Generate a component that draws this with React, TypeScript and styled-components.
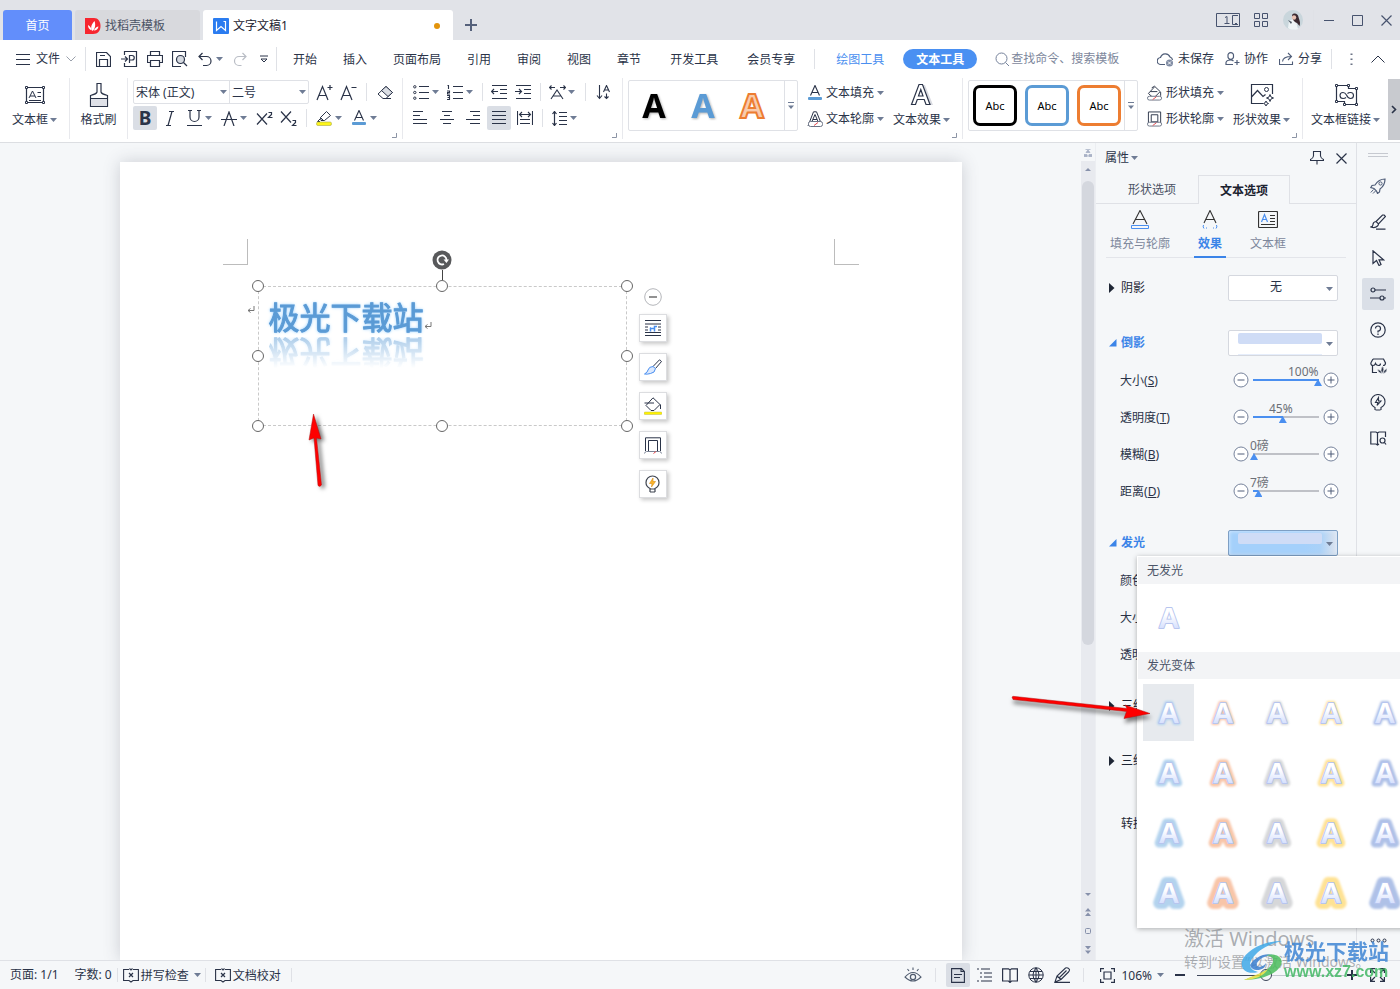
import React from 'react';
import styled, { createGlobalStyle, css } from 'styled-components';

const ink = '#2a3348';
const accent = '#4a8ff0';
const line = '#dfe1e6';

const Global = createGlobalStyle`
  *, *::before, *::after { box-sizing: border-box; }
  html, body { margin: 0; height: 100%; }
  body {
    font-family: 'Noto Sans', 'Noto Sans CJK SC', sans-serif;
    font-size: 12px;
    line-height: 16px;
    color: ${ink};
    background: #f5f7f9;
  }
  button, input, select {
    font: inherit;
    color: inherit;
    background: none;
    border: 0;
    padding: 0;
    margin: 0;
    outline: none;
  }
  svg { display: block; flex: none; }
`;

/* ---------- icons ---------- */

type IconDef = [number, number, React.ReactNode];

const icons: Record<string, IconDef> = {
  wps: [16, 16, <>
    <rect width="16" height="16" rx="1" fill="#2b7cf0" stroke="none" />
    <path d="M3.500 3.500V12.500L8 8.500L12.500 12.500V3.500H10.500" stroke="#fff" strokeWidth="1.200" />
  </>],
  docer: [16, 16, <>
    <path d="M0 0H9C13 0 15.500 3.500 15.500 8S13 16 8 16H0Z" fill="#f7262f" stroke="none" />
    <path d="M7.500 13C5 10 6.500 6 9.500 3C11 7 10 11 7.500 13ZM6.500 12.500C3.500 11 3 9 3 7C5 8 6.500 10 6.500 12.500ZM8.800 12.500C10 10 12 8.500 13.500 8.500C13 11 11.500 12.500 8.800 12.500Z" fill="#fff" stroke="none" />
  </>],
  plus: [12, 12, <path d="M6 0V12M0 6H12" strokeWidth="2" />],
  panes: [24, 14, <>
    <path d="M.5 .5H23.500V13.500H.5Z M22 2.500H16.500V11.500H22M19 10.500H21" />
    <path d="M9 4.500L11 3.500V10.500M8.500 10.500H13.500" />
  </>],
  grid: [15, 14, <path d="M.5 .5H5.500V5.500H.5ZM8.500 .5H13.500V5.500H8.500ZM.5 8.500H5.500V13.500H.5ZM8.500 8.500H13.500V13.500H8.500Z" />],
  avatar: [20, 20, <>
    <circle cx="10" cy="10" r="10" fill="#c9d6dc" stroke="none" />
    <path d="M6 11L12 8L15 19C12 20.500 7 20 5 18Z" fill="#eef4f6" stroke="none" />
    <path d="M9 5C11 2.500 15 3.500 15.500 7C16 10 18 12 16.500 16L14 13C11 12 9 9 9 5Z" fill="#3a2a31" stroke="none" />
    <circle cx="11" cy="7.500" r="2.200" fill="#e9c3b4" stroke="none" />
    <path d="M5 10L9 12L8 14Z" fill="#4b5561" stroke="none" />
  </>],
  min: [10, 11, <path d="M0 5.500H10" />],
  max: [11, 11, <path d="M.5 .5H10.500V10.500H.5Z" />],
  close: [11, 11, <path d="M.5 .5L10.500 10.500M10.500 .5L.5 10.500" strokeWidth="1.200" />],
  menu: [14, 11, <path d="M0 .5H14M0 5.500H14M0 10.500H14" />],
  chevDown: [10, 6, <path d="M.5 .5L5 5L9.500 .5" stroke="#9aa0ab" />],
  chevUp: [14, 8, <path d="M.5 7.500L7 1L13.500 7.500" />],
  chevRight: [6, 9, <path d="M1 1L4.500 4.500L1 8" strokeWidth="1.600" />],
  caret: [7, 4, <path d="M0 0H7L3.500 4Z" fill="#6f7c95" stroke="none" />],
  moreCaret: [6, 8, <><path d="M0 .5H6" stroke="#6f7c95" /><path d="M0 3.500H6L3 7Z" fill="#6f7c95" stroke="none" /></>],
  quick: [8, 8, <path d="M0 1H8M1 4L4 7L7 4Z" />],
  save: [15, 15, <path d="M.5 .5H10.500L14.500 4.500V14.500H.5ZM3.500 14.500V7.500H11.500V14.500M4 3.500H9" strokeWidth="1.200" />],
  exportPdf: [17, 16, <path d="M3.500 4V.5H15.500V15.500H3.500V12M0 8H6.500M4 5.500L6.500 8L4 10.500M8.500 12V4.500H11A2 2 0 0 1 11 9H8.500" strokeWidth="1.200" />],
  print: [16, 16, <path d="M3.500 4.500V.5H12.500V4.500M3.500 11.500H.5V4.500H15.500V11.500H12.500M3.500 9.500H12.500V15.500H3.500Z" strokeWidth="1.200" />],
  preview: [16, 16, <>
    <path d="M9 15.500H.5V.5H13.500V6" strokeWidth="1.200" />
    <circle cx="8.500" cy="8.500" r="4" fill="#d5d9e0" strokeWidth="1.200" /><path d="M11.500 11.500L15 15" strokeWidth="1.300" />
  </>],
  undo: [14, 15, <path d="M4.500 1L1 4.500L4.500 8M1 4.500H8.500A4.500 4.500 0 0 1 8.500 13.500H5" strokeWidth="1.200" />],
  redo: [14, 15, <path d="M9.500 1L13 4.500L9.500 8M13 4.500H6A4.500 4.500 0 0 0 6 13.500H8.500" stroke="#b9bdc5" strokeWidth="1.200" />],
  search: [15, 15, <><circle cx="6.500" cy="6.500" r="5.500" stroke="#75829b" /><path d="M10.500 10.500L14 14" stroke="#75829b" /></>],
  cloud: [17, 15, <>
    <path d="M8 12.500H4A3.500 3.500 0 0 1 3.500 5.500A5 5 0 0 1 13 5A3.500 3.500 0 0 1 15.500 8" stroke="#4f5d78" strokeWidth="1.200" />
    <circle cx="12.500" cy="11" r="3.500" fill="#7f8ba3" stroke="none" /><path d="M11 9.500L14 12.500M14 9.500L11 12.500" stroke="#fff" />
  </>],
  people: [15, 14, <path d="M8.500 4A2.800 2.800 0 1 1 3 4A2.800 2.800 0 1 1 8.500 4ZM8 12.500H1V10.500Q1.500 8 5.500 8Q7.500 8 8.500 9M9.500 10.500H14.500M12 8V13" stroke="#4f5d78" strokeWidth="1.200" />],
  share: [15, 14, <path d="M.5 7V12.500H13.500V9.500M3.500 9.500Q4 4.500 12.500 4.500M9 1L12.500 4.500L9 8" stroke="#4f5d78" strokeWidth="1.100" />],
  dots: [3, 13, <path d="M.5 .5H2.500V2H.5ZM.5 5.500H2.500V7H.5ZM.5 10.500H2.500V12H.5Z" fill="#6b7385" stroke="none" />],
  textbox: [22, 20, <>
    <path d="M2.500 2.500H19.500V17.500H2.500Z" strokeWidth="1.200" />
    <path d="M1.500 1.500H3.500V3.500H1.500ZM18.500 1.500H20.500V3.500H18.500ZM1.500 16.500H3.500V18.500H1.500ZM18.500 16.500H20.500V18.500H18.500Z" fill="#fff" />
    <path d="M5 13L8.500 6L12 13M6 11H11M13.500 7.500H17M13.500 11.500H17M5 15.500H17" />
  </>],
  painter: [20, 26, <>
    <path d="M8 1.500H12V10Q12.500 12 18.500 13.500V24.500H1.500V13.500Q7.500 12 8 10Z" fill="#fff" strokeWidth="1.200" />
    <path d="M2 16.500H18V24H2Z" fill="#dfe1e8" stroke="none" /><path d="M1.500 16.500H18.500" />
  </>],
  growA: [17, 17, <path d="M1 16L6.500 2.500L12 16M3 11.500H10M14 1V6M11.500 3.500H16.500" strokeWidth="1.200" />],
  shrinkA: [17, 17, <path d="M1 16L6.500 2.500L12 16M3 11.500H10M11.500 3.500H16.500" strokeWidth="1.200" />],
  eraser: [17, 15, <>
    <path d="M9 1.500L15.500 7.500L9 13.500H6L1 9Z" /><path d="M9 1.500L15.500 7.500L11 11.500L4.500 5.500Z" fill="#dcdfe5" /><path d="M6 13.500H14" />
  </>],
  italic: [10, 15, <path d="M4 .5H9M1 14.500H6M7 .5L3 14.500" strokeWidth="1.200" />],
  underline: [15, 16, <path d="M3 0V7A4.500 4.500 0 0 0 12 7V0M1 .5H5M10 .5H14M0 15.500H15" strokeWidth="1.200" />],
  strikeA: [16, 15, <path d="M3 15L8 1L13 15M0 8.500H16" strokeWidth="1.200" />],
  sup: [17, 15, <path d="M1 2.500L11 13.500M11 2.500L1 13.500M12.500 1.500H15.500V3.500L12.500 6.500H16.500" strokeWidth="1.200" />],
  sub: [17, 15, <path d="M1 .5L11 11.500M11 .5L1 11.500M12.500 9.500H15.500V11.500L12.500 14.500H16.500" strokeWidth="1.200" />],
  marker: [16, 16, <>
    <path d="M10.500 1.500L14.500 5.500L8.500 10.500H5L4.500 7.500ZM4.500 7.500L7.500 10.500M4.500 8.500L1.500 11.500H4" />
    <rect x=".5" y="12" width="15" height="3.500" rx="1.500" fill="#fdf51a" stroke="#a9a94c" strokeWidth=".6" />
  </>],
  colorA: [14, 16, <>
    <path d="M2.500 10.500L7 .5L11.500 10.500M4 7.500H10" strokeWidth="1.100" />
    <rect y="12" width="14" height="3" rx="1" fill="#5b9bd5" stroke="none" />
  </>],
  bullets: [16, 15, <>
    <path d="M6 1.500H16M6 7.500H16M6 13.500H16" strokeWidth="1.200" />
    <circle cx="1.800" cy="1.800" r="1.200" /><circle cx="1.800" cy="7.500" r="1.200" /><circle cx="1.800" cy="13.200" r="1.200" />
  </>],
  numbers: [16, 15, <path d="M6 1.500H16M6 7.500H16M6 13.500H16M.5 .5H1.500V4M0 6H2.500V7.500H.5V9H3M0 10.500H2.500V14.500H0M.5 12.500H2.500" strokeWidth="1.100" />],
  outdent: [16, 14, <path d="M1 .5H16M9 4.500H16M9 8.500H16M1 13.500H16M.5 6.500H7M3 4L.5 6.500L3 9" strokeWidth="1.200" />],
  indent: [16, 14, <path d="M1 .5H16M9 4.500H16M9 8.500H16M1 13.500H16M0 6.500H6.500M4 4L6.500 6.500L4 9" strokeWidth="1.200" />],
  scaleA: [17, 15, <path d="M2 14L8 5L14 14M4.500 11H12M.5 2.500H6M2.500 .5L.5 2.500L2.500 4.500M16.500 2.500H11M14.500 .5L16.500 2.500L14.500 4.500" strokeWidth="1.100" />],
  sort: [14, 15, <path d="M3.500 0V13M1 10.500L3.500 13.500L6 10.500M7.500 7L10.500 .5L13.500 7M8.500 5H12.500M10.500 8.500V13M8.500 11.500L10.500 13.500L12.500 11.500" strokeWidth="1.100" />],
  alignL: [14, 14, <path d="M0 .5H10M0 4.500H7M0 8.500H14M0 12.500H14" strokeWidth="1.200" />],
  alignC: [14, 14, <path d="M2 .5H12M4 4.500H10M0 8.500H14M3 12.500H11" strokeWidth="1.200" />],
  alignR: [14, 14, <path d="M4 .5H14M7 4.500H14M0 8.500H14M4 12.500H14" strokeWidth="1.200" />],
  justify: [14, 14, <path d="M0 .5H14M0 4.500H14M0 8.500H14M0 12.500H14" strokeWidth="1.200" />],
  spread: [16, 14, <path d="M.5 0V14M15.500 0V14M2.500 3.500H13.500M5 1L2.500 3.500L5 6M11 1L13.500 3.500L11 6M3 8.500H13M3 12.500H13" strokeWidth="1.100" />],
  spacing: [15, 15, <path d="M2.500 .5V14.500M.5 3L2.500 .5L4.500 3M.5 12L2.500 14.500L4.500 12M7 1.500H15M7 5.500H15M7 9.500H15M7 13.500H15" strokeWidth="1.200" />],
  outlineA: [16, 16, <>
    <path d="M1 15L6.500 .8H9.500L14 12M4.500 11.500L8 3.500L11 10.500M6 8.500H10" /><rect x="1.500" y="10.500" width="14" height="5" rx="2" fill="#fff" stroke="#6b7385" /><path d="M7 14.500L11 11.500" stroke="#e5484d" />
  </>],
  effectA: [24, 24, <>
    <path d="M12 2H15L23 22H19Z" fill="#d9dbe1" stroke="none" />
    <path d="M1.500 21.500L9 1.500H12.500L20 21.500H16L14.200 16.500H7.300L5.500 21.500ZM8.500 13H13L10.800 6.500Z" fill="#fff" strokeWidth="1.200" />
  </>],
  shapeFill: [17, 16, <>
    <path d="M5 2.500L8 .8L14 6.500L8 12.500H6L1.500 8.500L8 1.500M3.500 6.500H11M14.500 7V11" /><rect x=".5" y="11.500" width="15" height="4" rx="2" fill="#fff" stroke="#6b7385" /><path d="M6 15L10 12" stroke="#e5484d" />
  </>],
  shapeLine: [17, 16, <>
    <path d="M1.500 .5H14.500V12.500H1.500ZM4.500 3.500H11.500V11H4.500Z" /><rect x=".5" y="11.500" width="15" height="4" rx="2" fill="#fff" stroke="#6b7385" /><path d="M6 15L10 12" stroke="#e5484d" />
  </>],
  picture: [24, 22, <>
    <path d="M13 19.500H1.500V.5H22.500V10M1.500 13L7.500 6.500L13 12.500L15.500 10.500" strokeWidth="1.200" /><circle cx="16.500" cy="5.500" r="2" />
    <path d="M20 10.500L21 13L23.500 14L21 15L20 17.500L19 15L16.500 14L19 13Z" /><path d="M16 17L16.800 18.700L18.500 19.500L16.800 20.300L16 22L15.200 20.300L13.500 19.500L15.200 18.700Z" />
  </>],
  linkBox: [24, 22, <>
    <path d="M2.500 17.500V1.500H14.500V4.500H22.500V20.500H10.500V17.500Z" strokeWidth="1.200" />
    <path d="M1.500 .5H3.500V2.500H1.500ZM13.500 .5H15.500V2.500H13.500ZM21.500 3.500H23.500V5.500H21.500ZM1.500 16.500H3.500V18.500H1.500ZM9.500 19.500H11.500V21.500H9.500ZM21.500 19.500H23.500V21.500H21.500Z" fill="#fff" />
    <path d="M12 13.500Q11 14.500 9 14.500A3 3 0 0 1 9 8.500Q11 8.500 12.500 11Q14 14.500 16.500 14.500A3 3 0 0 0 16.500 8.500Q14.500 8.500 13.500 9.500" strokeWidth="1.100" />
  </>],
  pin: [14, 14, <path d="M3.500 .5H10.500V5Q11 7.500 13.500 8.500V9.500H.5V8.500Q3 7.500 3.500 5ZM7 9.500V13.500" strokeWidth="1.100" />],
  fillA: [18, 19, <><path d="M2 14L9 .5L16 14M4.500 9.500H13.500" strokeWidth="1.100" /><path d="M.5 15.500H17.500V18.500H.5Z" stroke={accent} /></>],
  glowA: [16, 19, <><path d="M2 13L8 .5L14 13M4 9.500H12" strokeWidth="1.100" /><path d="M1.500 15Q.5 17 2 18.500M14.500 15Q15.500 17 14 18.500M4 18H5M11 18H12" stroke={accent} /></>],
  boxA: [20, 17, <><rect x=".5" y=".5" width="19" height="16" rx="1" strokeWidth="1.200" /><path d="M3.500 11L6.500 3.500L9.500 11M4.500 8.500H8.500" stroke={accent} strokeWidth="1.200" /><path d="M12 4.500H17M12 7.500H17M12 10.500H17M3 13.500H17" /></>],
  triRight: [6, 10, <path d="M0 0L5.500 5L0 10Z" fill="#1e2635" stroke="none" />],
  triOpen: [8, 8, <path d="M7.500 0V7.500H0Z" fill="#3b84e8" stroke="none" />],
  minusC: [16, 16, <><circle cx="8" cy="8" r="7" fill="#fff" stroke="#75829b" /><path d="M4.500 8H11.500" stroke="#4f5d78" /></>],
  plusC: [16, 16, <><circle cx="8" cy="8" r="7" fill="#fff" stroke="#75829b" /><path d="M4.500 8H11.500M8 4.500V11.500" stroke="#4f5d78" /></>],
  rocket: [16, 16, <>
    <path d="M15 1C11 1 7.500 3 5 7L2 7.500L.8 9.500L4 10.500L6.500 13L7.500 15.500L9.500 14L10 11C13.500 8.500 15 5 15 1Z" stroke="#4f5d78" strokeWidth="1.200" />
    <circle cx="10.500" cy="5.500" r="1.600" stroke="#4f5d78" /><path d="M3.500 11.500L.8 14.500M5.500 13L3 15.500" stroke="#4f5d78" />
  </>],
  brush: [16, 16, <path d="M14 1L15.500 2.500L8.500 10L6 7.500L12.500 1ZM6 7.500Q3 8 3 10.500Q3 12.500 .8 13Q5 14.500 7.500 12Q8.500 11 8.500 10M6 15.200H15.500" strokeWidth="1.200" />],
  pointer: [14, 16, <path d="M2 .8V13.500L5.500 10.500L8 15.500L10 14.500L8 9.800H12.500Z" strokeWidth="1.200" />],
  adjust: [16, 14, <><circle cx="3" cy="3" r="2" strokeWidth="1.200" /><circle cx="12" cy="11" r="2" strokeWidth="1.200" /><path d="M5 3H16M0 11H10M14 11H16" strokeWidth="1.200" /></>],
  help: [16, 16, <><circle cx="8" cy="8" r="7.200" strokeWidth="1.200" /><path d="M5.500 6.500A2.500 2.500 0 1 1 8 9V10.500M8 11.500V13" strokeWidth="1.200" /></>],
  shop: [17, 16, <>
    <path d="M7 14.500H2.500V8M3 1H13.500L15.500 5Q15.500 7.500 13 7.500M.8 5L3 1M.8 5Q.8 7.500 3 7.500Q5 7.500 5.500 5.500Q6.500 7.500 8.500 7.500Q10.500 7.500 10.500 5.500" strokeWidth="1.200" />
    <path d="M12.500 15.500Q9.500 12.500 12.500 8Q15 11 12.500 15.500ZM12 15.500Q8 15 7.500 11.500Q11 11.500 12 15.500ZM13 15.500Q17 15 17 10.500Q13.500 12 13 15.500Z" fill={ink} stroke="#f5f7f9" strokeWidth=".5" />
  </>],
  bulb: [16, 17, <path d="M5 13.500Q1 11.500 1 7.500A7 7 0 0 1 15 7.500Q15 11.500 11 13.500M5.500 16H10.500M5 13V16M11 13V16M8.500 3.500L5.500 8.500H8L7 11.500L11 7H8.500Z" strokeWidth="1.100" />],
  bookSearch: [17, 15, <><path d="M7.500 2L6 1H.8V13H6L7.500 14L9 13M7.500 2V14M7.500 2L9 1H15.500V6" strokeWidth="1.200" /><circle cx="12.500" cy="9.500" r="2.500" strokeWidth="1.200" /><path d="M14.500 11.500L16 13.500" strokeWidth="1.200" /></>],
  moreC: [17, 5, <><circle cx="2.500" cy="2.500" r="1.500" /><circle cx="8.500" cy="2.500" r="1.500" /><circle cx="14.500" cy="2.500" r="1.500" /></>],
  spell: [16, 15, <><path d="M6 1.500H.6V12.500H6L8 14L10 12.500H15.400V1.500H10M6.500 .5L8 2L9.500 .5" strokeWidth="1.100" /><path d="M6 5L10 9M10 5L6 9" strokeWidth="1.200" /></>],
  eye: [18, 16, <><path d="M1 10Q9 1 17 10Q9 18 1 10ZM9 .5V3M3.500 2L5 4M14.500 2L13 4" stroke="#4f5b6e" strokeWidth="1.100" /><circle cx="9" cy="10" r="2.600" stroke="#4f5b6e" strokeWidth="1.200" /></>],
  doc: [14, 15, <path d="M.6 .6H10.500L13.400 3.500V14.400H.6ZM3 6.500H11M3 9.500H9M10 .8V3.500H13" strokeWidth="1.100" />],
  outline: [15, 14, <path d="M0 1H2M4 1H13M3 5H5M7 5H15M3 9H5M7 9H15M0 13H2M4 13H15" strokeWidth="1.200" />],
  book: [16, 15, <path d="M8 2L6.500 .8H.6V13H6.500L8 14.500L9.500 13H15.400V.8H9.500ZM8 2V14" strokeWidth="1.200" />],
  globe: [16, 16, <path d="M15.200 8A7.200 7.200 0 1 1 .8 8A7.200 7.200 0 1 1 15.200 8ZM8 .8Q2 8 8 15.200Q14 8 8 .8M8 .8V15.200M.8 8H15.200M2 4.500H14M2 11.500H14" />],
  pen: [17, 16, <path d="M1 15.400H16M1 15L3 9L11.500 1Q14 0 15.500 2.500Q15.500 4 14.500 5L7 12.500ZM3 9L7 12.500M5 11L12.500 3.500" strokeWidth="1.100" />],
  fit: [15, 15, <path d="M.6 4V.6H4M11 .6H14.400V4M14.400 11V14.400H11M4 14.400H.6V11M4 4H11V11H4Z" strokeWidth="1.200" />],
  zoomOut: [10, 2, <path d="M0 1H10" strokeWidth="2" />],
  zoomIn: [10, 10, <path d="M0 5H10M5 0V10" strokeWidth="2" />],
  expand: [15, 14, <path d="M.6 5V.6H5M10 .6H14.400V5M14.400 9V13.400H10M5 13.400H.6V9M1 1L5 5M14 1L10 5M14 13L10 9M1 13L5 9" strokeWidth="1.200" />],
  launcher: [5, 5, <path d="M4.500 0V4.500H0" stroke="#8c94a5" />],
  rulerTab: [8, 8, <path d="M1.500 .5H6.500M4 1L2 3.500H6ZM0 5.500H3V7.500H0ZM5 5.500H8V7.500H5ZM0 7H8" fill="#aab2c6" stroke="#aab2c6" strokeWidth=".8" />],
  up: [6, 3, <path d="M0 3L3 0L6 3Z" fill="#8791ab" stroke="none" />],
  down: [6, 3, <path d="M0 0L3 3L6 0Z" fill="#8791ab" stroke="none" />],
  pageUp: [6, 8, <path d="M0 3.500L3 0L6 3.500ZM0 8L3 4.500L6 8Z" fill="#8791ab" stroke="none" />],
  pageDown: [6, 8, <path d="M0 0L3 3.500L6 0ZM0 4.500L3 8L6 4.500Z" fill="#8791ab" stroke="none" />],
  dotBox: [6, 6, <rect x=".5" y=".5" width="5" height="5" rx="1" stroke="#8791ab" />],
  wrap: [16, 16, <><path d="M0 .5H16M0 4H16M0 12.500H16M0 15.500H16M0 7H3M0 10H3M13 7H16M13 10H16" strokeWidth="1.200" /><path d="M5.500 11.500V8.500H9.500V11.500M5 8L6 8M9.500 9V6.500H12" stroke={accent} strokeWidth="1.500" /></>],
  brushBlue: [18, 16, <><path d="M9 7.500L15.500 .8L17.500 2.500L11.500 9.500" /><path d="M9 7.500L11.500 9.500Q11 14 6.500 14.500Q3 15.500 .5 15Q3.500 13.500 4 11Q5 7.500 9 7.500Z" fill="#dbe8fd" stroke={accent} /></>],
  bucket: [18, 18, <><path d="M9 .8L16 7.500L10 13.500H7L2 8.500ZM.5 6H10M16.500 7.500V12" /><rect y="15" width="18" height="2.500" rx="1" fill="#fff200" stroke="#b9b95c" strokeWidth=".5" /></>],
  frame: [18, 17, <><path d="M1.500 14V.8H16.500V14M4.500 14V3.500H13.500V14" /><path d="M.5 16.500Q1 14.500 2.500 14.500H15.500Q17 14.500 17.500 16.500" stroke="#7b8395" /><path d="M9.500 16.500L12 14.500" stroke="#e5484d" /></>],
  bulbGold: [15, 18, <><path d="M5 13.500Q1 11.500 1 7.500A6.500 6.500 0 0 1 14 7.500Q14 11.500 10 13.500M5 17H10M5 13V17M10 13V17M5 14H10" stroke="#3e4450" strokeWidth="1.200" /><path d="M8 3L4.500 8.500H7L6.500 12L10.500 6.500H8Z" fill="#fdb52b" stroke="#d58b13" strokeWidth=".6" /></>],
  collapse: [18, 18, <><circle cx="9" cy="9" r="8.300" fill="#fff" stroke="#b4b6ba" /><path d="M5 9H13" stroke="#777" strokeWidth="1.600" /></>],
  rotate: [20, 20, <><circle cx="10" cy="10" r="9.500" fill="#58595b" stroke="none" /><path d="M14.500 10A4.500 4.500 0 1 0 12 14" stroke="#fff" strokeWidth="1.800" /><path d="M11.500 9.500H17L14.500 13Z" fill="#fff" stroke="none" /></>],
  paraMark: [8, 7, <path d="M7 0V4.500H1M3.500 2.500L1 4.500L3.500 6.500" stroke="#777" />],
};

const Icon = ({ name }: { name: string }) => {
  const [w, h, body] = icons[name];
  return (
    <svg width={w} height={h} viewBox={`0 0 ${w} ${h}`} fill="none" stroke="currentColor" aria-hidden="true">
      {body}
    </svg>
  );
};

/* ---------- shared parts ---------- */

const Shell = styled.div`
  position: relative;
  display: flex;
  flex-direction: column;
  height: 100vh;
  overflow: hidden;
`;

const Defs = styled.svg`
  position: absolute;
`;

const Spacer = styled.div`
  flex: 1;
`;

const Divider = styled.span<{ $h?: number; $m?: number }>`
  flex: none;
  width: 1px;
  height: ${p => p.$h ?? 18}px;
  margin: 0 ${p => p.$m ?? 5}px;
  background: ${line};
`;

const IconButton = styled.button<{ $w?: number; $on?: boolean }>`
  flex: none;
  display: flex;
  align-items: center;
  justify-content: center;
  width: ${p => p.$w ?? 24}px;
  height: 24px;
  border-radius: 2px;
  background: ${p => (p.$on ? '#dadee5' : 'transparent')};
`;

const SplitButton = styled.button`
  flex: none;
  display: grid;
  grid-template-columns: 16px 7px;
  column-gap: 3px;
  align-items: center;
  justify-items: center;
  width: 34px;
  height: 24px;
  padding-left: 3px;
`;

/* ---------- title bar ---------- */

const TitleBar = styled.header`
  flex: none;
  display: flex;
  align-items: flex-end;
  height: 40px;
  padding-left: 3px;
  background: #e1e3e8;
`;

const Tab = styled.button<{ $kind: 'home' | 'idle' | 'active' }>`
  display: flex;
  align-items: center;
  gap: 4px;
  height: 30px;
  margin-right: 3px;
  padding: 1px 10px 0;
  border-radius: 3px 3px 0 0;
  ${p => p.$kind === 'home' && css`width: 69px; justify-content: center; background: #628efb; color: #fff;`}
  ${p => p.$kind === 'idle' && css`width: 125px; background: #d8d9dd; color: #4b5365;`}
  ${p => p.$kind === 'active' && css`width: 250px; background: #fff; color: #1b2230;`}
`;

const Unsaved = styled.span`
  width: 6px;
  height: 6px;
  margin: 0 3px 0 auto;
  border-radius: 50%;
  background: #e3940c;
`;

const NewTab = styled.button`
  display: flex;
  align-items: center;
  justify-content: center;
  width: 30px;
  height: 30px;
  color: #55617b;
`;

const WindowControls = styled.div`
  display: flex;
  align-items: center;
  align-self: stretch;
  gap: 18px;
  padding-right: 8px;
  color: #47536e;
`;

const ControlGroup = styled.div`
  display: flex;
  align-items: center;
  gap: 14px;
`;

const BareButton = styled.button`
  display: flex;
  align-items: center;
  justify-content: center;
`;

/* ---------- menu bar ---------- */

const MenuBar = styled.nav`
  flex: none;
  display: flex;
  align-items: center;
  height: 38px;
  padding: 0 15px 0 16px;
  background: #fff;
`;

const FileButton = styled.button`
  display: flex;
  align-items: center;
  gap: 6px;
  margin-right: 4px;
`;

const QuickTools = styled.div`
  display: flex;
  align-items: center;
  gap: 2px;
`;

const MenuList = styled.div<{ $gap: number; $left: number }>`
  display: flex;
  align-items: center;
  gap: ${p => p.$gap}px;
  margin-left: ${p => p.$left}px;
`;

const MenuItem = styled.button<{ $tone?: 'context' | 'current' }>`
  padding-top: 2px;
  white-space: nowrap;
  ${p => p.$tone === 'context' && css`color: ${accent};`}
  ${p => p.$tone === 'current' && css`
    height: 20px;
    padding: 1px 13px 0;
    border-radius: 10px;
    background: #4a90f2;
    color: #fff;
    font-weight: 700;
  `}
`;

const SearchBox = styled.label`
  display: flex;
  align-items: center;
  gap: 1px;
  margin-left: 18px;
  input { width: 130px; }
  input::placeholder { color: #7d879c; opacity: 1; }
`;

const AccountTools = styled.div`
  display: flex;
  align-items: center;
  gap: 11px;
  white-space: nowrap;
`;

const AccountButton = styled.button`
  display: flex;
  align-items: center;
  gap: 4px;
`;

const EndTools = styled.div`
  display: flex;
  align-items: center;
  gap: 18px;
  margin-left: -2px;
`;

/* ---------- ribbon ---------- */

const Ribbon = styled.section`
  flex: none;
  position: relative;
  z-index: 2;
  display: flex;
  height: 65px;
  overflow: hidden;
  background: #fff;
  border-bottom: 1px solid #dcdee2;
`;

const Group = styled.div<{ $w: number; $center?: boolean; $last?: boolean }>`
  position: relative;
  flex: none;
  display: flex;
  width: ${p => p.$w}px;
  height: 61px;
  padding: 2px 0 0 5px;
  border-right: ${p => (p.$last ? 0 : 1)}px solid #e8e9ed;
  ${p => p.$center && css`justify-content: center; padding-left: 0;`}
`;

const Rows = styled.div`
  display: flex;
  flex-direction: column;
  gap: 2px;
`;

const Row = styled.div<{ $gap?: number; $pad?: number }>`
  display: flex;
  align-items: center;
  gap: ${p => p.$gap ?? 0}px;
  padding-left: ${p => p.$pad ?? 0}px;
  height: 24px;
`;

const TallButton = styled.button<{ $w?: number }>`
  flex: none;
  display: grid;
  grid-template-rows: 28px 18px;
  row-gap: 2px;
  align-items: center;
  align-content: start;
  justify-items: center;
  width: ${p => p.$w ?? 60}px;
  height: 51px;
  padding-top: 1px;
  white-space: nowrap;
`;

const Caption = styled.span`
  display: flex;
  align-items: center;
  gap: 2px;
`;

const Launcher = styled.button`
  position: absolute;
  right: 5px;
  bottom: 1px;
`;

const FontPicker = styled.div`
  display: flex;
  height: 24px;
  margin-right: 3px;
  border: 1px solid ${line};
  border-radius: 2px;
`;

const Picker = styled.label<{ $w: number }>`
  position: relative;
  width: ${p => p.$w}px;
  & + & { border-left: 1px solid ${line}; }
  select {
    appearance: none;
    width: 100%;
    height: 22px;
    padding-left: 2px;
    padding-top: 1px;
  }
  svg { position: absolute; right: 2px; top: 9px; pointer-events: none; }
`;

const BoldGlyph = styled.b`
  font: 700 19px/22px 'Noto Sans', sans-serif;
`;

const Gallery = styled.div`
  flex: none;
  display: flex;
  width: 170px;
  height: 51px;
  border: 1px solid ${line};
  border-radius: 2px;
`;

const GalleryCells = styled.div<{ $gap: number }>`
  flex: 1;
  display: flex;
  align-items: center;
  gap: ${p => p.$gap}px;
  padding-left: ${p => (p.$gap ? 4 : 0)}px;
`;

const GalleryMore = styled.button`
  display: flex;
  align-items: center;
  justify-content: center;
  width: 13px;
  border-left: 1px solid ${line};
`;

const ArtCell = styled.button`
  width: 49px;
  height: 49px;
  display: flex;
  align-items: center;
  justify-content: center;
`;

const ArtText = styled.text<{ $flat?: boolean }>`
  font: 700 34px 'Noto Sans', sans-serif;
  text-anchor: middle;
  filter: ${p => (p.$flat ? 'none' : 'drop-shadow(1px 1px 1px rgba(0, 0, 0, 0.3))')};
`;

const ShapeCell = styled.button<{ $color: string }>`
  width: 44px;
  height: 41px;
  border: 3px solid ${p => p.$color};
  border-radius: 7px;
  background: #fff;
  color: #000;
  font-size: 11px;
`;

const SideRows = styled(Rows)<{ $left: number }>`
  margin-left: ${p => p.$left}px;
`;

const LabelButton = styled.button`
  display: flex;
  align-items: center;
  gap: 3px;
  height: 24px;
  padding-top: 1px;
  white-space: nowrap;
  svg:first-child { width: 16px; }
`;

const RibbonScroll = styled.button`
  display: flex;
  align-items: center;
  justify-content: center;
  width: 13px;
  height: 61px;
  margin: 1px 0 0 auto;
  background: #c8cacf;
`;

/* ---------- workspace ---------- */

const Workspace = styled.main`
  flex: 1;
  min-height: 0;
  display: flex;
  background: #f5f7f9;
`;

const Canvas = styled.div`
  flex: 1;
  min-width: 0;
  display: flex;
  justify-content: center;
  padding-top: 19px;
  overflow: hidden;
`;

const Page = styled.article`
  position: relative;
  flex: none;
  width: 842px;
  background: #fff;
  box-shadow: 0 0 16px rgba(60, 66, 80, 0.22);
`;

const CropMark = styled.span<{ $x: number; $side: 'left' | 'right' }>`
  position: absolute;
  top: 77px;
  left: ${p => p.$x}px;
  width: 25px;
  height: 26px;
  border-bottom: 1px solid #bcbcbc;
  border-${p => (p.$side === 'left' ? 'right' : 'left')}: 1px solid #bcbcbc;
`;

const TextFrame = styled.div`
  position: absolute;
  left: 138px;
  top: 124px;
  width: 369px;
  height: 140px;
  &::before {
    content: '';
    position: absolute;
    inset: 0;
    border: 1px dashed #c9c9c9;
  }
`;

const Handle = styled.span<{ $x: number; $y: number }>`
  position: absolute;
  left: calc(${p => p.$x}% - 6px);
  top: calc(${p => p.$y}% - 6px);
  width: 12px;
  height: 12px;
  border: 1px solid #666;
  border-radius: 50%;
  background: #fff;
`;

const RotateStem = styled.span`
  position: absolute;
  left: calc(50% - 10px);
  top: -36px;
  display: flex;
  flex-direction: column;
  align-items: center;
  width: 20px;
  &::after { content: ''; width: 1px; height: 10px; background: #444; }
`;

const WordArt = styled.p`
  position: absolute;
  left: 11px;
  top: 13px;
  margin: 0;
  font: 400 31px/34px 'Noto Sans CJK SC', sans-serif;
  color: #5b9bd5;
  -webkit-text-stroke: 1px #5b9bd5;
  white-space: nowrap;
  text-shadow: 0 0 2px #9bcffc, 0 0 3px #b0d9fc, 0 0 4px #c2e2fd;
  -webkit-box-reflect: below 4px linear-gradient(transparent 8%, rgba(0, 0, 0, 0.5));
`;

const Mark = styled.span<{ $x: number; $y: number }>`
  position: absolute;
  left: ${p => p.$x}px;
  top: ${p => p.$y}px;
`;

const FloatTools = styled.div`
  position: absolute;
  left: 519px;
  top: 126px;
  display: flex;
  flex-direction: column;
  align-items: center;
  gap: 11px;
`;

const FloatButton = styled.button`
  display: flex;
  align-items: center;
  justify-content: center;
  width: 28px;
  height: 28px;
  border: 1px solid #dcdde0;
  background: #fff;
  box-shadow: 2px 2px 4px rgba(0, 0, 0, 0.22);
`;

const CollapseButton = styled(BareButton)`
  margin-bottom: -3px;
`;

const Scroll = styled.div`
  flex: none;
  display: flex;
  flex-direction: column;
  align-items: center;
  width: 14px;
  padding: 6px 0;
  background: linear-gradient(#f5f7f9 18px, #e8eaef 18px);
`;

const Thumb = styled.span`
  width: 12px;
  height: 464px;
  margin-top: 10px;
  border-radius: 6px;
  background: #d4d7de;
`;

const ScrollSteps = styled.div`
  display: flex;
  flex-direction: column;
  align-items: center;
  gap: 12px;
  margin-top: auto;
`;

const UpArrow = styled(BareButton)`
  margin-top: 11px;
`;

/* ---------- properties panel ---------- */

const Panel = styled.aside`
  position: relative;
  flex: none;
  width: 262px;
  border-left: 1px solid #eceef2;
  border-right: 1px solid ${line};
  background: #f5f7f9;
`;

const PanelHead = styled.div`
  display: flex;
  align-items: center;
  gap: 12px;
  height: 30px;
  padding: 0 9px;
`;

const PanelTabs = styled.div`
  display: flex;
  height: 29px;
  margin-top: 2px;
  &::after { content: ''; flex: 1; border-bottom: 1px solid ${line}; }
`;

const PanelTab = styled.button<{ $on?: boolean; $w: number }>`
  width: ${p => p.$w}px;
  padding-top: 1px;
  border-bottom: 1px solid ${line};
  color: #4b5365;
  ${p => !p.$on && css`padding-left: 10px;`}
  ${p => p.$on && css`
    border: 1px solid ${line};
    border-bottom: 0;
    color: #1b2230;
    font-weight: 700;
  `}
`;

const SubTabs = styled.div`
  display: flex;
  height: 54px;
  margin: 0 10px;
  border-bottom: 1px solid #e3e5ea;
`;

const SubTab = styled.button<{ $w: number; $on?: boolean }>`
  display: grid;
  grid-template-rows: 20px 20px;
  row-gap: 5px;
  align-content: start;
  align-items: center;
  justify-items: center;
  width: ${p => p.$w}px;
  height: 54px;
  padding-top: 5px;
  white-space: nowrap;
  span { color: #7d879c; }
  svg { color: #333; }
  ${p => p.$on && css`
    margin: 0 5px;
    border-bottom: 2px solid #3b84e8;
    span { color: #3b84e8; font-weight: 700; }
  `}
`;

const Section = styled.div<{ $gap: number }>`
  display: flex;
  align-items: center;
  height: 26px;
  margin-top: ${p => p.$gap}px;
  padding: 0 18px 0 13px;
`;

const SectionTitle = styled.button<{ $open?: boolean }>`
  display: grid;
  grid-template-columns: 12px auto;
  align-items: center;
  color: ${p => (p.$open ? '#3b84e8' : '#1e2635')};
  font-weight: ${p => (p.$open ? 700 : 400)};
  white-space: nowrap;
`;

const dropBox = css`
  position: relative;
  width: 110px;
  height: 26px;
  margin-left: auto;
  border: 1px solid #d5d8df;
  border-radius: 2px;
  background: #fff;
  svg { position: absolute; right: 4px; top: 11px; pointer-events: none; }
`;

const EffectSelect = styled.label`
  ${dropBox}
  select {
    appearance: none;
    width: 100%;
    height: 22px;
    padding: 0 14px 0 0;
    text-align: center;
  }
`;

const SwatchDrop = styled.button<{ $glow?: boolean }>`
  ${dropBox}
  overflow: hidden;
  ${p => p.$glow && css`
    border-color: #7e9fc4;
    background: linear-gradient(90deg, #a4d0fb 70%, #a9d1f8 84%, #dfe4ee 100%);
    box-shadow: inset 0 0 4px #d9ecff;
  `}
  &::before {
    content: '';
    position: absolute;
    left: 9px;
    top: 2px;
    width: 84px;
    height: 11px;
    border-radius: 2px;
    background: #cfdcf6;
  }
  &::after {
    content: '';
    position: absolute;
    left: 9px;
    bottom: 0;
    width: 84px;
    height: ${p => (p.$glow ? 0 : 1)}px;
    background: #e5edfb;
  }
`;

const Fields = styled.div`
  padding: 6px 17px 0 24px;
`;

const Field = styled.div`
  display: flex;
  align-items: center;
  height: 37px;
  white-space: nowrap;
`;

const SliderBox = styled.div`
  display: flex;
  align-items: center;
  gap: 4px;
  margin-left: auto;
  padding-bottom: 1px;
`;

const SliderTrack = styled.div`
  position: relative;
  width: 66px;
  height: 16px;
  &::before {
    content: '';
    position: absolute;
    top: 7px;
    left: 0;
    right: 0;
    height: 2px;
    background: linear-gradient(90deg, ${accent} var(--fill), #bfc1c7 var(--fill));
  }
  output {
    position: absolute;
    top: -8px;
    color: #6c7078;
  }
  input {
    position: relative;
    display: block;
    appearance: none;
    width: 72px;
    height: 16px;
    margin-left: -3px;
  }
  input::-webkit-slider-runnable-track { height: 2px; }
  input::-webkit-slider-thumb {
    appearance: none;
    width: 8px;
    height: 7px;
    background: ${accent};
    clip-path: polygon(50% 0, 100% 100%, 0 100%);
  }
`;

/* ---------- glow menu ---------- */

const GlowMenu = styled.div`
  position: absolute;
  z-index: 5;
  left: 41px;
  top: 413px;
  width: 280px;
  border: 1px solid #fff;
  background: #fff;
  box-shadow: 0 1px 5px rgba(0, 0, 0, 0.3);
`;

const MenuHeading = styled.h3`
  height: 27px;
  margin: 0;
  padding-left: 9px;
  background: #f3f4f6;
  color: #4b5568;
  font-size: 12px;
  font-weight: 400;
  line-height: 27px;
`;

const GlowGrid = styled.div`
  display: grid;
  grid-template-columns: repeat(5, 51px);
  grid-auto-rows: 57px;
  gap: 3px;
  padding: 5px 5px 6px;
`;

const GlowCell = styled.button<{ $on?: boolean }>`
  display: flex;
  align-items: center;
  justify-content: center;
  background: ${p => (p.$on ? '#e7eaee' : 'transparent')};
`;

const GlowLetter = ({ color, size }: { color?: string; size: number }) => (
  <svg width="50" height="50" viewBox="0 0 50 50" aria-hidden="true">
    <g fontFamily="Liberation Sans, sans-serif" fontWeight="700" fontSize="29" textAnchor="middle" strokeLinejoin="round">
      {color && <text x="25" y="35" fill={color} stroke={color} strokeWidth={size} filter="url(#soften)">A</text>}
      <text x="25" y="35" fill="url(#iceFill)" stroke="#b7c5ee" strokeWidth="2" paintOrder="stroke">A</text>
    </g>
  </svg>
);

/* ---------- side rail ---------- */

const Rail = styled.div`
  flex: none;
  display: flex;
  flex-direction: column;
  align-items: center;
  gap: 4px;
  width: 43px;
  padding: 10px 1px 17px 0;
`;

const Grip = styled.span`
  width: 20px;
  height: 4px;
  margin-bottom: 9px;
  border: solid #c6c9d0;
  border-width: 1px 0;
`;

const RailButton = styled.button<{ $on?: boolean }>`
  display: flex;
  align-items: center;
  justify-content: center;
  width: 32px;
  height: 32px;
  border-radius: 2px;
  background: ${p => (p.$on ? '#dadfe7' : 'transparent')};
`;

const RailMore = styled(BareButton)`
  margin-top: auto;
`;

/* ---------- status bar ---------- */

const StatusBar = styled.footer`
  flex: none;
  display: flex;
  align-items: center;
  height: 29px;
  padding: 0 15px 0 10px;
  border-top: 1px solid ${line};
  background: #f5f7f9;
  white-space: nowrap;
`;

const StatusText = styled.span`
  margin-right: 16px;
`;

const StatusButton = styled.button`
  display: flex;
  align-items: center;
  gap: 2px;
  span { padding-top: 1px; }
  span + svg { margin-left: 3px; }
`;

const ViewButtons = styled.div`
  display: flex;
  gap: 2px;
`;

const ZoomRange = styled.input`
  appearance: none;
  width: 148px;
  height: 16px;
  margin: 0 2px 0 12px;
  &::-webkit-slider-runnable-track {
    height: 1px;
    background: linear-gradient(90deg, #3d465a 46%, #c3c7d0 46%);
  }
  &::-webkit-slider-thumb {
    appearance: none;
    width: 12px;
    height: 12px;
    margin-top: -6px;
    border: 1px solid #3d465a;
    border-radius: 50%;
    background: #f5f7f9;
  }
`;

/* ---------- overlays ---------- */

const ArrowUp = styled.svg`
  position: absolute;
  left: 180px;
  top: 246px;
  overflow: visible;
  filter: drop-shadow(3px 2px 2px rgba(0, 0, 0, 0.55));
`;

const ArrowRight = styled.svg`
  position: absolute;
  z-index: 6;
  right: 249px;
  top: 694px;
  overflow: visible;
  filter: drop-shadow(1px 4px 2px rgba(0, 0, 0, 0.5));
`;

const Activation = styled.div`
  position: absolute;
  z-index: 7;
  right: 16px;
  bottom: 17px;
  width: 200px;
  color: rgba(120, 124, 130, 0.6);
  font-size: 14px;
  line-height: 20px;
  white-space: nowrap;
  pointer-events: none;
  strong { display: block; font-size: 20px; font-weight: 400; line-height: 26px; }
`;

const SiteMark = styled.div`
  position: absolute;
  z-index: 8;
  right: 11px;
  bottom: 6px;
  display: flex;
  white-space: nowrap;
  opacity: 0.85;
  pointer-events: none;
`;

const SiteName = styled.div`
  color: #3f86d4;
  font: 700 21px/22px 'Noto Sans CJK SC', sans-serif;
  span {
    display: block;
    color: #43b866;
    font: 700 16px/22px 'Liberation Sans', sans-serif;
  }
`;

/* ---------- data ---------- */

const mainMenus = ['开始', '插入', '页面布局', '引用', '审阅', '视图', '章节'];
const extraMenus = ['开发工具', '会员专享'];
const glowColors = ['#b3d3ee', '#f8c5a8', '#d6d7d9', '#fee294', '#afc1e7'];
const glowSizes = [4, 7, 9, 12];
const reflection = [
  { label: '大小', k: 'S', text: '100%', value: 100, at: 35 },
  { label: '透明度', k: 'T', text: '45%', value: 45, at: 16 },
  { label: '模糊', k: 'B', text: '0磅', value: 0, at: -3 },
  { label: '距离', k: 'D', text: '7磅', value: 7, at: -3 },
];
const handles = [[0, 0], [50, 0], [100, 0], [0, 50], [100, 50], [0, 100], [50, 100], [100, 100]];
const railIcons = ['rocket', 'brush', 'pointer', 'adjust', 'help', 'shop', 'bulb', 'bookSearch'];

const Split = ({ icon, label }: { icon: string; label: string }) => (
  <SplitButton aria-label={label}><Icon name={icon} /><Icon name="caret" /></SplitButton>
);

const Tool = ({ icon, label, on, w }: { icon: string; label: string; on?: boolean; w?: number }) => (
  <IconButton aria-label={label} $on={on} $w={w}><Icon name={icon} /></IconButton>
);

const Tall = ({ icon, label, caret, w }: { icon: string; label: string; caret?: boolean; w?: number }) => (
  <TallButton $w={w}>
    <Icon name={icon} />
    <Caption>{label}{caret && <Icon name="caret" />}</Caption>
  </TallButton>
);

const Labelled = ({ icon, label }: { icon: string; label: string }) => (
  <LabelButton><Icon name={icon} />{label}<Icon name="caret" /></LabelButton>
);

const ArtLetter = ({ fill, stroke }: { fill: string; stroke?: string }) => (
  <svg width="48" height="48" viewBox="0 0 48 48" aria-hidden="true">
    <ArtText x="24" y="36" fill={fill} stroke={stroke ?? 'none'} strokeWidth="2" $flat={!!stroke}>A</ArtText>
  </svg>
);

export default function App() {
  return (
    <Shell>
      <Global />
      <Defs width="0" height="0" aria-hidden="true">
        <defs>
          <linearGradient id="iceFill" x1="0" y1="0" x2="0" y2="1">
            <stop offset=".4" stopColor="#fff" />
            <stop offset=".85" stopColor="#d3defd" />
          </linearGradient>
          <filter id="soften" x="-40%" y="-40%" width="180%" height="180%"><feGaussianBlur stdDeviation="1.3" /></filter>
        </defs>
      </Defs>

      <TitleBar>
        <Tab $kind="home">首页</Tab>
        <Tab $kind="idle"><Icon name="docer" />找稻壳模板</Tab>
        <Tab $kind="active"><Icon name="wps" />文字文稿1<Unsaved /></Tab>
        <NewTab aria-label="新建"><Icon name="plus" /></NewTab>
        <Spacer />
        <WindowControls>
          <ControlGroup>
            <BareButton aria-label="窗口"><Icon name="panes" /></BareButton>
            <BareButton aria-label="应用"><Icon name="grid" /></BareButton>
            <BareButton aria-label="账号"><Icon name="avatar" /></BareButton>
          </ControlGroup>
          <Divider $h={20} $m={-8} />
          <BareButton aria-label="最小化"><Icon name="min" /></BareButton>
          <BareButton aria-label="最大化"><Icon name="max" /></BareButton>
          <BareButton aria-label="关闭"><Icon name="close" /></BareButton>
        </WindowControls>
      </TitleBar>

      <MenuBar>
        <FileButton><Icon name="menu" />文件<Icon name="chevDown" /></FileButton>
        <Divider $h={24} $m={5} />
        <QuickTools>
          <Tool icon="save" label="保存" />
          <Tool icon="exportPdf" label="输出为PDF" />
          <Tool icon="print" label="打印" w={23} />
          <Tool icon="preview" label="打印预览" />
          <Split icon="undo" label="撤销" />
          <Tool icon="redo" label="恢复" w={20} />
          <Tool icon="quick" label="自定义快速访问" />
        </QuickTools>
        <Divider $h={24} $m={0} />
        <MenuList $gap={26} $left={16}>{mainMenus.map(m => <MenuItem key={m}>{m}</MenuItem>)}</MenuList>
        <MenuList $gap={29} $left={29}>{extraMenus.map(m => <MenuItem key={m}>{m}</MenuItem>)}</MenuList>
        <Divider $h={20} $m={19} />
        <MenuList $gap={19} $left={2}>
          <MenuItem $tone="context">绘图工具</MenuItem>
          <MenuItem $tone="current">文本工具</MenuItem>
        </MenuList>
        <SearchBox><Icon name="search" /><input type="search" aria-label="查找" placeholder="查找命令、搜索模板" /></SearchBox>
        <Spacer />
        <AccountTools>
          <AccountButton><Icon name="cloud" />未保存</AccountButton>
          <AccountButton><Icon name="people" />协作</AccountButton>
          <AccountButton><Icon name="share" />分享</AccountButton>
          <EndTools>
            <Divider $h={20} $m={0} />
            <BareButton aria-label="更多"><Icon name="dots" /></BareButton>
            <BareButton aria-label="收起功能区"><Icon name="chevUp" /></BareButton>
          </EndTools>
        </AccountTools>
      </MenuBar>

      <Ribbon>
        <Group $w={70} $center><Tall icon="textbox" label="文本框" caret /></Group>
        <Group $w={58} $center><Tall icon="painter" label="格式刷" w={56} /></Group>
        <Group $w={275}>
          <Rows>
            <Row>
              <FontPicker>
                <Picker $w={95}><select aria-label="字体"><option>宋体 (正文)</option></select><Icon name="caret" /></Picker>
                <Picker $w={79}><select aria-label="字号"><option>二号</option></select><Icon name="caret" /></Picker>
              </FontPicker>
              <Tool icon="growA" label="增大字号" />
              <Tool icon="shrinkA" label="减小字号" />
              <Divider $m={6} />
              <Tool icon="eraser" label="清除格式" />
            </Row>
            <Row $gap={1}>
              <IconButton $on aria-label="加粗"><BoldGlyph>B</BoldGlyph></IconButton>
              <Tool icon="italic" label="倾斜" />
              <Split icon="underline" label="下划线" />
              <Split icon="strikeA" label="删除线" />
              <Tool icon="sup" label="上标" w={23} />
              <Tool icon="sub" label="下标" w={23} />
              <Divider $m={5} />
              <Split icon="marker" label="突出显示" />
              <Split icon="colorA" label="字体颜色" />
            </Row>
          </Rows>
          <Launcher aria-label="字体设置"><Icon name="launcher" /></Launcher>
        </Group>
        <Group $w={220}>
          <Rows>
            <Row $pad={2}>
              <Split icon="bullets" label="项目符号" />
              <Split icon="numbers" label="编号" />
              <Divider $m={4} />
              <Tool icon="outdent" label="减少缩进" />
              <Tool icon="indent" label="增加缩进" />
              <Divider />
              <Split icon="scaleA" label="中文版式" />
              <Divider />
              <Tool icon="sort" label="排序" />
            </Row>
            <Row $gap={2}>
              <Tool icon="alignL" label="左对齐" />
              <Tool icon="alignC" label="居中" w={25} />
              <Tool icon="alignR" label="右对齐" />
              <Tool icon="justify" label="两端对齐" on />
              <Tool icon="spread" label="分散对齐" />
              <Divider $m={3} />
              <Split icon="spacing" label="行距" />
            </Row>
          </Rows>
          <Launcher aria-label="段落设置"><Icon name="launcher" /></Launcher>
        </Group>
        <Group $w={340}>
          <Gallery>
            <GalleryCells $gap={0}>
              <ArtCell aria-label="黑色艺术字"><ArtLetter fill="#000" /></ArtCell>
              <ArtCell aria-label="蓝色艺术字"><ArtLetter fill="#5b9bd5" /></ArtCell>
              <ArtCell aria-label="橙色艺术字"><ArtLetter fill="#f8cbad" stroke="#ed7d31" /></ArtCell>
            </GalleryCells>
            <GalleryMore aria-label="更多艺术字"><Icon name="moreCaret" /></GalleryMore>
          </Gallery>
          <SideRows $left={9}>
            <Labelled icon="colorA" label="文本填充" />
            <Labelled icon="outlineA" label="文本轮廓" />
          </SideRows>
          <Tall icon="effectA" label="文本效果" caret w={75} />
          <Launcher aria-label="文本设置"><Icon name="launcher" /></Launcher>
        </Group>
        <Group $w={340}>
          <Gallery>
            <GalleryCells $gap={8}>
              <ShapeCell $color="#000">Abc</ShapeCell>
              <ShapeCell $color="#5b9bd5">Abc</ShapeCell>
              <ShapeCell $color="#ed7d31">Abc</ShapeCell>
            </GalleryCells>
            <GalleryMore aria-label="更多形状样式"><Icon name="moreCaret" /></GalleryMore>
          </Gallery>
          <SideRows $left={9}>
            <Labelled icon="shapeFill" label="形状填充" />
            <Labelled icon="shapeLine" label="形状轮廓" />
          </SideRows>
          <Tall icon="picture" label="形状效果" caret w={75} />
          <Launcher aria-label="形状设置"><Icon name="launcher" /></Launcher>
        </Group>
        <Group $w={85} $center $last><Tall icon="linkBox" label="文本框链接" caret w={85} /></Group>
        <RibbonScroll aria-label="向右滚动"><Icon name="chevRight" /></RibbonScroll>
      </Ribbon>

      <Workspace>
        <Canvas>
          <Page>
            <CropMark $x={103} $side="left" />
            <CropMark $x={714} $side="right" />
            <Mark $x={127} $y={144}><Icon name="paraMark" /></Mark>
            <TextFrame>
              <WordArt>极光下载站</WordArt>
              <Mark $x={166} $y={36}><Icon name="paraMark" /></Mark>
              <RotateStem><Icon name="rotate" /></RotateStem>
              {handles.map(([x, y]) => <Handle key={`${x}-${y}`} $x={x} $y={y} />)}
            </TextFrame>
            <FloatTools>
              <CollapseButton aria-label="收起"><Icon name="collapse" /></CollapseButton>
              <FloatButton aria-label="环绕方式"><Icon name="wrap" /></FloatButton>
              <FloatButton aria-label="形状样式"><Icon name="brushBlue" /></FloatButton>
              <FloatButton aria-label="填充"><Icon name="bucket" /></FloatButton>
              <FloatButton aria-label="轮廓"><Icon name="frame" /></FloatButton>
              <FloatButton aria-label="智能推荐"><Icon name="bulbGold" /></FloatButton>
            </FloatTools>
            <ArrowUp width="30" height="80" viewBox="0 0 30 80" aria-hidden="true">
              <path d="M13.500 6L21 31L16.500 30L21.500 77Q20 79.500 18 77.500L14 30L9 32Z" fill="#fe0000" stroke="#b01010" strokeWidth=".5" />
            </ArrowUp>
          </Page>
        </Canvas>
        <Scroll>
          <Icon name="rulerTab" />
          <UpArrow aria-label="向上"><Icon name="up" /></UpArrow>
          <Thumb />
          <ScrollSteps>
            <BareButton aria-label="向下"><Icon name="down" /></BareButton>
            <BareButton aria-label="上一页"><Icon name="pageUp" /></BareButton>
            <BareButton aria-label="选择浏览对象"><Icon name="dotBox" /></BareButton>
            <BareButton aria-label="下一页"><Icon name="pageDown" /></BareButton>
          </ScrollSteps>
        </Scroll>

        <Panel>
          <PanelHead>
            <Caption>属性<Icon name="caret" /></Caption>
            <Spacer />
            <BareButton aria-label="固定"><Icon name="pin" /></BareButton>
            <BareButton aria-label="关闭面板"><Icon name="close" /></BareButton>
          </PanelHead>
          <PanelTabs>
            <PanelTab $w={102}>形状选项</PanelTab>
            <PanelTab $w={92} $on>文本选项</PanelTab>
          </PanelTabs>
          <SubTabs>
            <SubTab $w={68}><Icon name="fillA" /><span>填充与轮廓</span></SubTab>
            <Spacer />
            <SubTab $w={32} $on><Icon name="glowA" /><span>效果</span></SubTab>
            <SubTab $w={74}><Icon name="boxA" /><span>文本框</span></SubTab>
            <Divider $h={0} $m={20} />
          </SubTabs>

          <Section $gap={17}>
            <SectionTitle><Icon name="triRight" />阴影</SectionTitle>
            <EffectSelect><select aria-label="阴影"><option>无</option></select><Icon name="caret" /></EffectSelect>
          </Section>
          <Section $gap={29}>
            <SectionTitle $open><Icon name="triOpen" />倒影</SectionTitle>
            <SwatchDrop aria-label="倒影样式"><Icon name="caret" /></SwatchDrop>
          </Section>
          <Fields>
            {reflection.map(f => (
              <Field key={f.k}>
                <label htmlFor={`refl-${f.k}`}>{f.label}(<u>{f.k}</u>)</label>
                <SliderBox>
                  <BareButton aria-label="减少"><Icon name="minusC" /></BareButton>
                  <SliderTrack style={{ '--fill': `${f.value}%` } as React.CSSProperties}>
                    <output style={{ left: f.at }}>{f.text}</output>
                    <input id={`refl-${f.k}`} type="range" defaultValue={f.value} />
                  </SliderTrack>
                  <BareButton aria-label="增加"><Icon name="plusC" /></BareButton>
                </SliderBox>
              </Field>
            ))}
          </Fields>
          <Section $gap={20}>
            <SectionTitle $open><Icon name="triOpen" />发光</SectionTitle>
            <SwatchDrop $glow aria-label="发光样式" aria-expanded="true"><Icon name="caret" /></SwatchDrop>
          </Section>
          <Fields>
            <Field>颜色</Field>
            <Field>大小</Field>
            <Field>透明度</Field>
          </Fields>
          <Section $gap={20}><SectionTitle><Icon name="triRight" />三维格式</SectionTitle></Section>
          <Section $gap={29}><SectionTitle><Icon name="triRight" />三维旋转</SectionTitle></Section>
          <Section $gap={37}><SectionTitle><span />转换</SectionTitle></Section>

          <GlowMenu>
            <MenuHeading>无发光</MenuHeading>
            <GlowGrid><GlowCell aria-label="无发光"><GlowLetter size={0} /></GlowCell></GlowGrid>
            <MenuHeading>发光变体</MenuHeading>
            <GlowGrid>
              {glowSizes.map((size, r) => glowColors.map((color, c) => (
                <GlowCell key={`${r}-${c}`} $on={r === 0 && c === 0} aria-label={`发光 ${r * 5 + c + 1}`}>
                  <GlowLetter color={color} size={size} />
                </GlowCell>
              )))}
            </GlowGrid>
          </GlowMenu>
        </Panel>

        <Rail>
          <Grip />
          {railIcons.map(n => <RailButton key={n} aria-label={n} $on={n === 'adjust'}><Icon name={n} /></RailButton>)}
          <RailMore aria-label="更多工具"><Icon name="moreC" /></RailMore>
        </Rail>
      </Workspace>

      <StatusBar>
        <StatusText>页面: 1/1</StatusText>
        <span>字数: 0</span>
        <Divider $h={14} $m={5} />
        <StatusButton><Icon name="spell" /><span>拼写检查</span><Icon name="caret" /></StatusButton>
        <Divider $h={14} $m={4} />
        <Divider $h={0} $m={2} />
        <StatusButton><Icon name="spell" /><span>文档校对</span></StatusButton>
        <Divider $h={14} $m={10} />
        <Spacer />
        <IconButton aria-label="护眼模式"><Icon name="eye" /></IconButton>
        <Divider $h={14} $m={10} />
        <ViewButtons>
          <Tool icon="doc" label="页面视图" on />
          <Tool icon="outline" label="大纲" />
          <Tool icon="book" label="阅读版式" />
          <Tool icon="globe" label="Web版式" />
          <Tool icon="pen" label="写作模式" />
        </ViewButtons>
        <Divider $h={14} $m={9} />
        <IconButton aria-label="适合页面" $w={28}><Icon name="fit" /></IconButton>
        <StatusButton><span>106%</span><Icon name="caret" /></StatusButton>
        <Divider $h={0} $m={5} />
        <BareButton aria-label="缩小"><Icon name="zoomOut" /></BareButton>
        <ZoomRange type="range" aria-label="缩放" defaultValue={46} />
        <BareButton aria-label="放大"><Icon name="zoomIn" /></BareButton>
        <Divider $h={0} $m={6} />
        <BareButton aria-label="全屏"><Icon name="expand" /></BareButton>
      </StatusBar>

      <ArrowRight width="140" height="30" viewBox="0 0 140 30" aria-hidden="true">
        <path d="M1 3Q2 2 4 2.500L116 14.500L114 11L139 19.500L113 24.500L115.500 17.500L2 5.500Z" fill="#fe0000" stroke="#b01010" strokeWidth=".5" />
      </ArrowRight>
      <Activation><strong>激活 Windows</strong>转到“设置”以激活 Windows。</Activation>
      <SiteMark>
        <svg width="44" height="44" viewBox="0 0 44 44" fill="none" aria-hidden="true">
          <path d="M42 2C22 2 6 12 2 22C0 31 8 36 18 33C10 31 8 26 12 20C17 12 28 5 42 2Z" fill="#3fa9e8" />
          <path d="M10 26C14 18 28 12 34 17C30 15 20 18 17 24C15 30 24 28 26 24C26 32 12 34 10 26Z" fill="#3b7fd0" />
          <path d="M26 16C36 14 44 18 41 26C37 35 22 41 4 41C18 36 31 30 33 23C34 19 31 17 26 16Z" fill="#4bbd5c" />
          <path d="M4 41C14 36 22 34 28 30C24 37 14 41 4 41Z" fill="#e5dd3a" />
        </svg>
        <SiteName>极光下载站<span>www.xz7.com</span></SiteName>
      </SiteMark>
    </Shell>
  );
}
